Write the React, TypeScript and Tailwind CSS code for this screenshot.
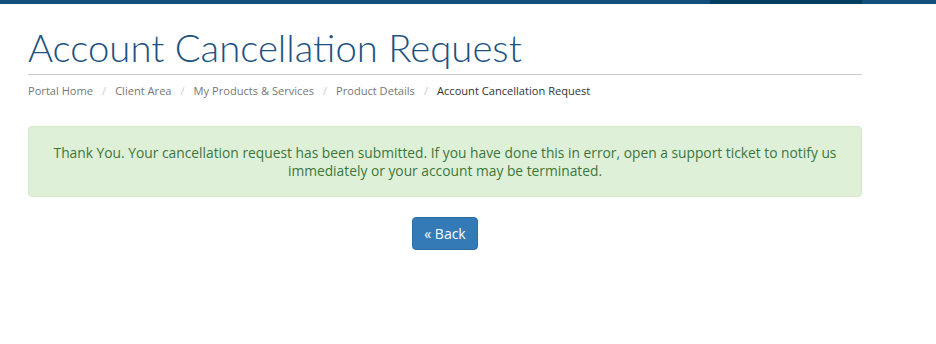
export default function App() {
  const crumbs = ["Portal Home", "Client Area", "My Products & Services", "Product Details"];

  return (
    <div className="w-[936px] h-[344px] bg-white relative overflow-hidden">
      {/* top strip */}
      <div className="flex h-[4px] bg-[#125079]">
        <div className="ml-[710px] w-[152px] bg-[#033d60]" />
      </div>

      <div className="ml-[28px] w-[834px]">
        <h1
          className="pt-[23px] pb-[6px] text-[38.3px] leading-[41px] font-light text-[#1d5281] border-b border-[#cccccc]"
          style={{ fontFamily: "Lato, 'Open Sans', sans-serif" }}
        >
          Account Cancellation Request
        </h1>

        <div
          className="flex items-center pt-[8px] text-[11.1px] leading-[16px]"
          style={{ fontFamily: "'Open Sans', sans-serif" }}
        >
          {crumbs.map((c) => (
            <span key={c} className="flex items-center">
              <span className="text-[#777777]">{c}</span>
              <span className="px-[9px] text-[#cccccc]">/</span>
            </span>
          ))}
          <span className="text-[#333333]">Account Cancellation Request</span>
        </div>

        <div
          className="mt-[27px] h-[71px] flex items-center justify-center px-[20px] bg-[#dff0d8] border border-[#d6e9c6] rounded-[4px] text-[#3c763d] text-[13.8px] leading-[18px] text-center"
          style={{ fontFamily: "'Open Sans', sans-serif" }}
        >
          <p>
            Thank You. Your cancellation request has been submitted. If you have done this in error, open a support ticket to notify us immediately or your account may be terminated.
          </p>
        </div>

        <div className="flex justify-center mt-[20px]">
          <button
            className="w-[66px] h-[33px] bg-[#337ab7] border border-[#2e6da4] rounded-[4px] text-white text-[14px]"
            style={{ fontFamily: "'Open Sans', sans-serif" }}
          >
            « Back
          </button>
        </div>
      </div>
    </div>
  );
}
